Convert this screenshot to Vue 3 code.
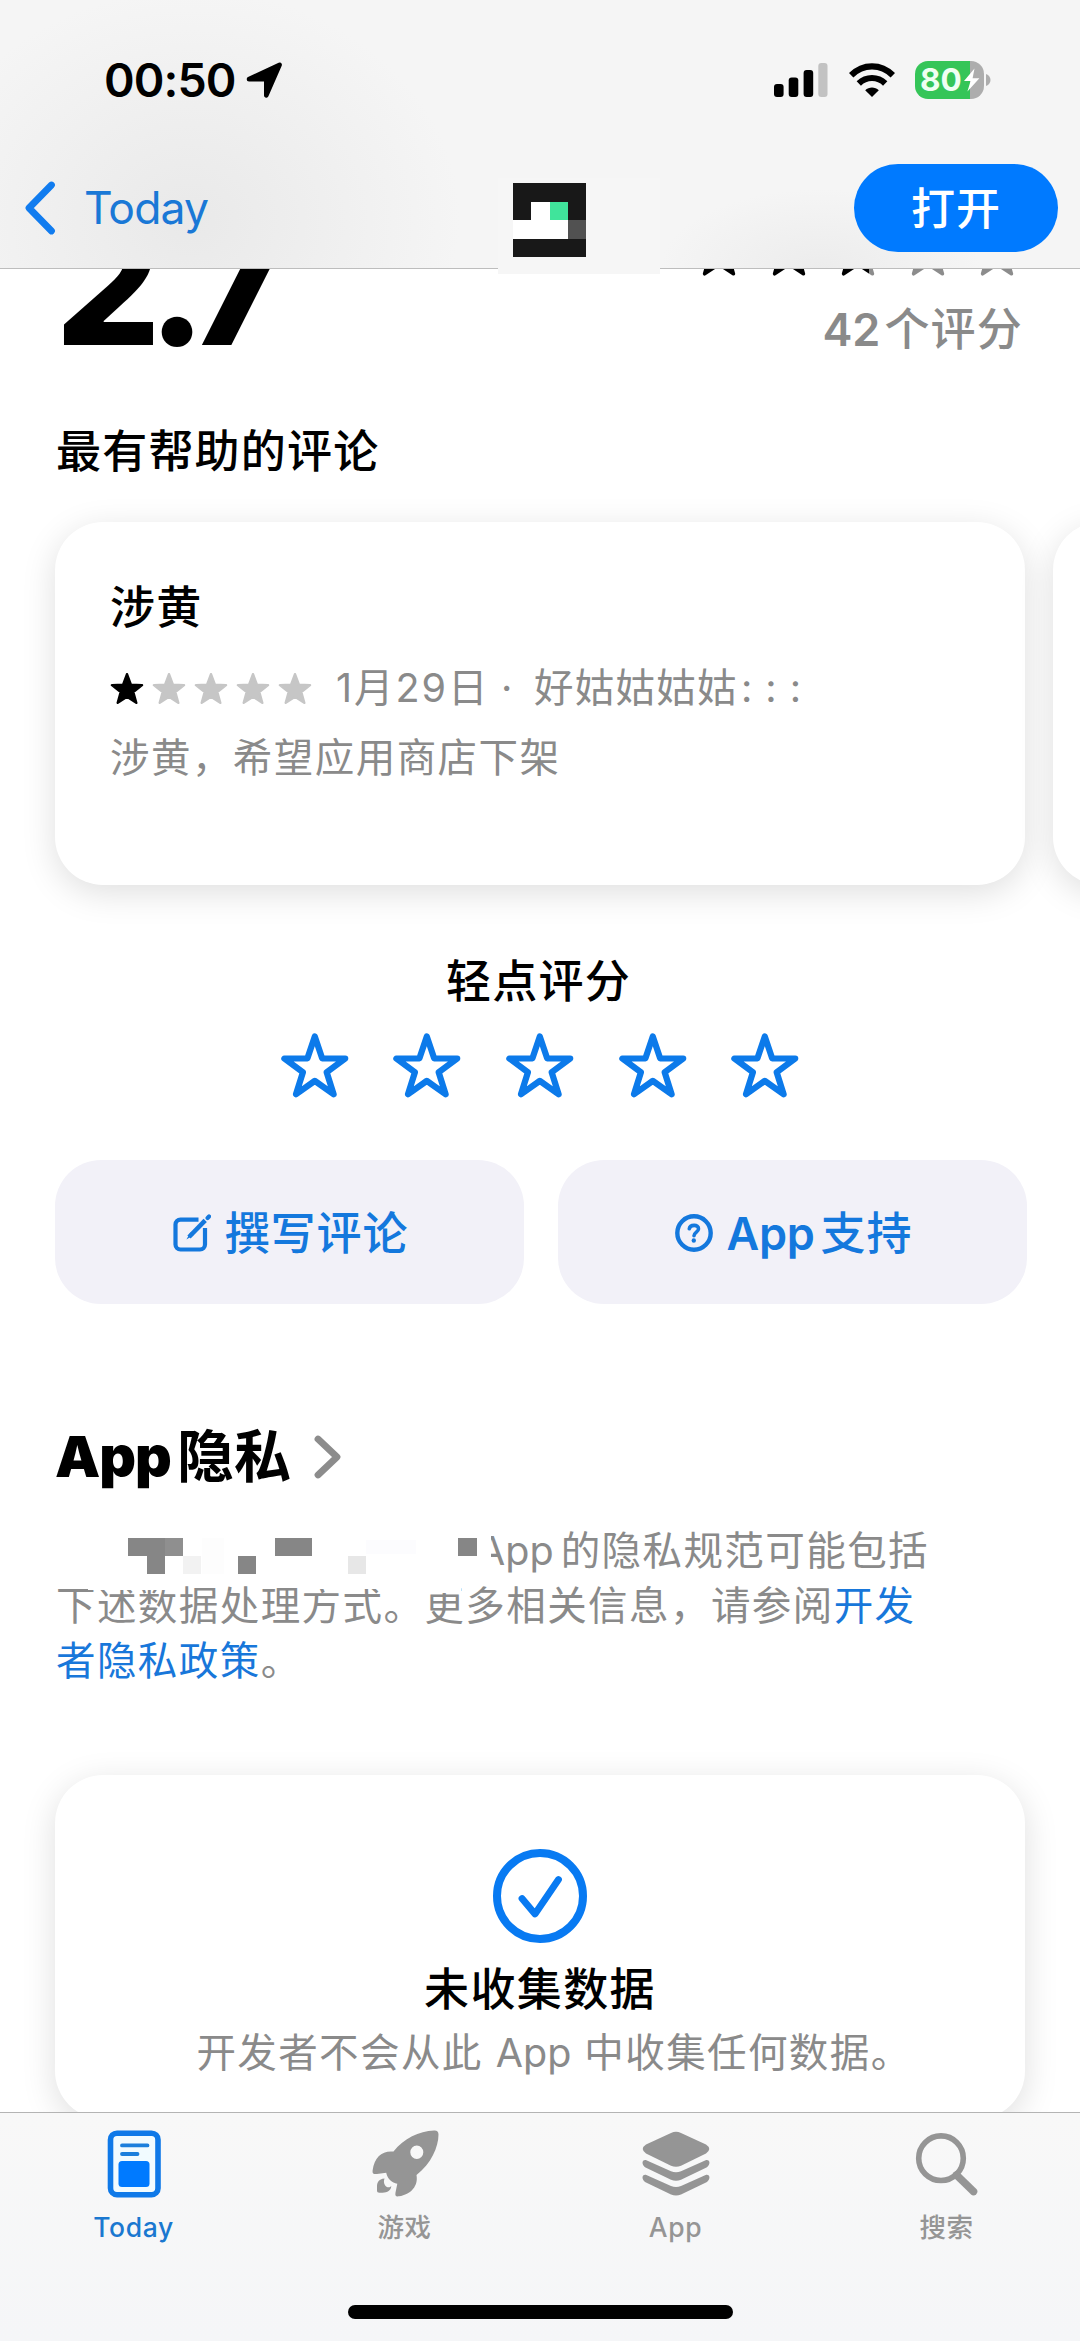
<script setup>
function starPoints(cx, cy, r, inner) {
  const pts = []
  for (let i = 0; i < 10; i++) {
    const rad = i % 2 ? r * inner : r
    const a = -Math.PI / 2 + (i * Math.PI) / 5
    pts.push((cx + rad * Math.cos(a)).toFixed(2) + ',' + (cy + rad * Math.sin(a)).toFixed(2))
  }
  return pts.join(' ')
}
const star = starPoints(34.8, 35.4, 32, 0.39)
const smallStar = starPoints(17, 17, 15.8, 0.42)
const bigStar = starPoints(26, 26, 24.5, 0.42)
const summaryFill = ['#000', '#000', 'url(#partial)', '#8c8c8c', '#8c8c8c']
const reviewFill = ['#000', '#c6c6c6', '#c6c6c6', '#c6c6c6', '#c6c6c6']
const iconCells = [
  '#181818', '#181818', '#181818', '#181818',
  '#181818', '#fff', '#40e49b', '#181818',
  '#fff', '#fff', '#fff', '#515151',
  '#181818', '#181818', '#181818', '#181818',
]
</script>

<template>
  <div class="screen">
    <header class="top">
      <div class="status">
        <span class="time">00:50</span>
        <svg class="loc" width="38" height="38" viewBox="0 0 38 38">
          <path d="M3 18.2 33.6 3.8 20.3 34.4 V18.2Z" fill="#000" stroke="#000" stroke-width="4.6" stroke-linejoin="round" />
        </svg>
        <span class="grow"></span>
        <svg class="bars" width="54" height="36" viewBox="0 0 54 36">
          <rect x="0" y="22" width="9.6" height="13" rx="3" />
          <rect x="14.7" y="15.5" width="9.6" height="19.5" rx="3" />
          <rect x="29.6" y="8" width="9.6" height="27" rx="3" />
          <rect x="44.3" y="1" width="9.2" height="34" rx="3" fill="#c2c2c2" />
        </svg>
        <svg class="wifi" width="46" height="36" viewBox="0 0 46 36">
          <g fill="none" stroke="#000" stroke-width="6.2">
            <path d="M2.2 13.2C14 1.3 32 1.3 43.8 13.2" />
            <path d="M9.8 21.4C17.3 14.2 28.7 14.2 36.2 21.4" />
          </g>
          <path d="M23 35 16.2 28.2C20 24.6 26 24.6 29.8 28.2Z" />
        </svg>
        <div class="battery">
          <span class="level">80</span>
          <svg class="bolt" width="18" height="24" viewBox="0 0 18 24"><path d="M11.5 0.5 1 13H7.6L4.4 23.5 16.4 10.2H9.6Z" fill="#fff" /></svg>
        </div>
        <svg class="tip" width="5" height="12" viewBox="0 0 5 12"><path d="M0 0C6 2 6 10 0 12Z" fill="#adadad" /></svg>
      </div>
      <nav class="nav">
        <svg class="back" width="36" height="56" viewBox="0 0 36 56"><path d="M30.500 5 8 28 30.500 51" fill="none" stroke="#117cef" stroke-width="6.8" stroke-linecap="round" stroke-linejoin="round" /></svg>
        <span class="back-label">Today</span>
        <button class="open">打开</button>
      </nav>
      <div class="app-tile">
        <div class="app-icon">
          <i v-for="(c, i) in iconCells" :key="i" :style="{ background: c }"></i>
        </div>
      </div>
    </header>

    <main class="content">
      <section class="summary">
        <div class="score">2.7</div>
        <div class="totals">
          <div class="total-stars">
            <svg v-for="(f, i) in summaryFill" :key="i" width="52" height="52" viewBox="0 0 52 52">
              <defs>
                <linearGradient id="partial">
                  <stop offset="0.74" stop-color="#000" /><stop offset="0.74" stop-color="#8c8c8c" />
                </linearGradient>
              </defs>
              <polygon :points="bigStar" :fill="f" :stroke="f" stroke-width="3.5" stroke-linejoin="round" />
            </svg>
          </div>
          <div class="count"><span class="num">42</span>个评分</div>
        </div>
      </section>

      <h3 class="sub">最有帮助的评论</h3>
      <section class="reviews">
        <article class="card review">
          <h4>涉黄</h4>
          <div class="meta">
            <div class="small-stars">
              <svg v-for="(f, i) in reviewFill" :key="i" width="34" height="34" viewBox="0 0 34 34">
                <polygon :points="smallStar" :fill="f" :stroke="f" stroke-width="2.4" stroke-linejoin="round" />
              </svg>
            </div>
            <span class="date">1月29日</span><span class="mid">·</span><span class="author">好姑姑姑姑</span><span class="colons">:::</span>
          </div>
          <p>涉黄，希望应用商店下架</p>
        </article>
        <article class="card next"></article>
      </section>

      <h3 class="tap">轻点评分</h3>
      <div class="tap-stars">
        <svg v-for="n in 5" :key="n" width="70" height="65" viewBox="0 0 70 65">
          <polygon :points="star" fill="none" stroke="#0c7aea" stroke-width="6.200" stroke-linejoin="round" />
        </svg>
      </div>

      <div class="actions">
        <button class="action">
          <svg width="38" height="38" viewBox="0 0 38 38" fill="none" stroke="#1478dd">
            <path d="M25.5 5.6H7.5A5 5 0 0 0 2.5 10.600V30.500A5 5 0 0 0 7.500 35.500H27A5 5 0 0 0 32 30.500V14" stroke-width="4.200" />
            <path d="M32.200 6.400 16 23" stroke-width="4.600" />
            <path d="M17.500 18.300 13.400 25.500 20.500 21.300Z" fill="#1478dd" stroke="none" />
            <path d="M34.600 3.900 36 2.500" stroke-width="4.200" stroke-linecap="round" />
          </svg>
          <span>撰写评论</span>
        </button>
        <button class="action">
          <svg width="38" height="38" viewBox="0 0 38 38" fill="none" stroke="#1478dd">
            <circle cx="19" cy="19" r="16.700" stroke-width="4.400" />
            <path d="M14.300 14.800C15 10.200 23.700 10.200 23.500 15 23.400 18 19 18.300 19 21.800" stroke-width="3.600" stroke-linecap="round" />
            <circle cx="18.800" cy="26.500" r="2.200" fill="#1478dd" stroke="none" />
          </svg>
          <span><b class="latin">App</b>支持</span>
        </button>
      </div>

      <h2 class="privacy-title">
        <b>App</b><span>隐私</span>
        <svg width="30" height="48" viewBox="0 0 30 48"><path d="M5 6 24 24 5 42" fill="none" stroke="#8c8c8c" stroke-width="6.800" stroke-linecap="round" stroke-linejoin="round" /></svg>
      </h2>
      <div class="privacy">
        <div class="line first"><span class="name-gap"></span><span class="latin">App</span>的隐私规范可能包括</div>
        <div class="line">下述数据处理方式。更多相关信息，请参阅<a>开发</a></div>
        <div class="line"><a>者隐私政策</a>。</div>
        <svg class="mosaic" width="410" height="60" viewBox="88 1537 410 60" shape-rendering="crispEdges">
          <path d="M88 1537H491V1575H461V1594H425V1590H303V1586H181V1591H88Z" fill="#fff" />
          <g fill="#868686">
            <rect x="128" y="1539" width="55" height="18" />
            <rect x="147" y="1557" width="18" height="18" />
            <rect x="238" y="1557" width="18" height="18" />
            <rect x="275" y="1539" width="37" height="18" />
            <rect x="458" y="1539" width="19" height="18" />
          </g>
          <rect x="165" y="1539" width="18" height="18" fill="#8f8f8f" />
          <rect x="183" y="1557" width="18" height="18" fill="#f2f2f2" />
          <rect x="348" y="1557" width="18" height="18" fill="#e7e7e7" />
          <rect x="202" y="1539" width="22" height="36" fill="#fdfdfd" />
          <rect x="366" y="1541" width="50" height="14" fill="#fcfcfe" />
        </svg>
      </div>

      <section class="card data">
        <svg width="94" height="94" viewBox="0 0 94 94" fill="none" stroke="#087af2" stroke-linecap="round" stroke-linejoin="round">
          <circle cx="47" cy="47" r="43" stroke-width="8" />
          <path d="M29 49.500 42 65 65.500 30.500" stroke-width="6.800" />
        </svg>
        <h4>未收集数据</h4>
        <p>开发者不会从此<span class="latin">App</span>中收集任何数据。</p>
      </section>
    </main>

    <footer class="tabs">
      <div class="tab-row">
        <div class="tab on">
          <svg width="70" height="70" viewBox="0 0 70 70">
            <rect x="11.500" y="4.200" width="47.500" height="61.500" rx="6.500" fill="#f1fbff" stroke="#0f79e8" stroke-width="5.600" />
            <path d="M23 16.400H48.500M23 25H38.500" stroke="#1c7fdc" stroke-width="3.800" stroke-linecap="round" />
            <rect x="19.500" y="32" width="31" height="26" rx="3.500" fill="#007aff" />
          </svg>
          <span>Today</span>
        </div>
        <div class="tab">
          <svg width="70" height="70" viewBox="0 0 70 70">
            <path fill="#959595" fill-rule="evenodd" d="M23.500 22.600C34 9 49 2.200 64 1.500 67 1.300 68.500 2.500 68.500 5.500 68.500 18 61 35 46.500 46 48.500 57 41 65.500 29 67.300 25.500 67.800 25 66.500 25.500 63.500L27.300 54.700C22 54 17.500 50 16.200 43.700L7 45C3.500 45.500 2.200 44.500 2.600 41.500 4.500 28 12 21.500 23.500 22.600ZM46.800 16.500A6.500 6.800 0 1 0 46.800 30.100 6.500 6.800 0 1 0 46.800 16.500Z" />
            <path fill="#959595" d="M14.500 49.500C8.500 50 7 53.500 7 58V61.500C7 63 7.800 63.700 9.500 63.700H12.500C17.500 63.700 21 61.500 21.300 57 18.500 60.500 12 56.500 14.500 49.500Z" />
          </svg>
          <span>游戏</span>
        </div>
        <div class="tab">
          <svg width="70" height="70" viewBox="0 0 70 70" fill="#959595">
            <path d="M30 3.900Q35 1.700 40 3.900L65 15.600Q71.500 20 65 24.400L40 36.700Q35 38.800 30 36.700L5 24.400Q-1.500 20 5 15.600Z" />
            <path d="M4.800 31 30 42.300Q35 44.200 40 42.300L65.200 31C69.500 30.500 69.500 36 65.500 38.500L40 50.800Q35 52.800 30 50.800L4.500 38.500C.5 36 .5 30.500 4.800 31Z" />
            <path d="M4.800 45.800 30 57.100Q35 59 40 57.100L65.200 45.800C69.500 45.300 69.500 50.800 65.500 53.300L40 65.600Q35 67.600 30 65.600L4.500 53.300C.5 50.800 .5 45.300 4.800 45.800Z" />
          </svg>
          <span>App</span>
        </div>
        <div class="tab">
          <svg width="70" height="70" viewBox="0 0 70 70" fill="none" stroke="#959595">
            <circle cx="29" cy="29.200" r="22.300" stroke-width="5.600" />
            <path d="M44.500 46 61.500 62.500" stroke-width="7.600" stroke-linecap="round" />
          </svg>
          <span>搜索</span>
        </div>
      </div>
      <div class="home"></div>
    </footer>
  </div>
</template>

<style>
body { margin: 0; background: #fff; }
</style>

<style scoped>
.screen {
  width: 1080px; height: 2341px; overflow: hidden; background: #fff; color: #000;
  display: flex; flex-direction: column;
  font-family: Inter, "Noto Sans CJK SC", sans-serif;
}
h2, h3, h4, p { margin: 0; font-weight: 500; }
button { border: 0; padding: 0; font: inherit; }
svg { display: block; flex: none; }

.top {
  position: relative; z-index: 2; box-sizing: border-box; height: 269px; flex: none;
  border-bottom: 1px solid #bdbdbd;
  background:
    radial-gradient(ellipse 270px 230px at 190px 220px, #e9e9e9, rgba(245, 245, 245, 0)),
    radial-gradient(ellipse 160px 80px at 820px 269px, #ececec, rgba(245, 245, 245, 0)),
    #f5f5f5;
}
.status { display: flex; height: 38px; padding: 61px 90px 0 104px; align-items: center; }
.time { width: 142px; font-size: 46.500px; line-height: 38px; font-weight: 600; letter-spacing: -.900px; white-space: nowrap; }
.grow { flex: 1; }
.bars { margin-right: 21px; }
.wifi { margin-right: 20px; }
.battery {
  display: flex; align-items: center; width: 69px; height: 38px; border-radius: 13px;
  background: linear-gradient(90deg, #35c558 55.500px, #adadad 55.500px);
}
.level { width: 43px; margin-left: 5.500px; font-size: 31.500px; line-height: 38px; font-weight: 700; color: #effff2; }
.tip { margin-left: 2px; margin-right: -0.500px; }

.nav { display: flex; align-items: center; height: 88px; margin-top: 65px; padding: 0 22px 0 21px; }
.back { margin-right: 27px; }
.back-label { flex: 1; font-size: 44.500px; line-height: 88px; color: #1a78d6; letter-spacing: -.900px; }
.open {
  width: 204px; height: 88px; border-radius: 44px; background: #007aff; color: #fff;
  font-size: 44px; font-weight: 500; letter-spacing: 1px; padding-bottom: 5px;
}
.app-tile { position: absolute; left: 498px; top: 178px; width: 147px; height: 81px; padding: 5px 0 10px 15px; background: #f6f6f6; }
.app-icon { display: grid; grid-template-columns: repeat(4, 18.250px); grid-auto-rows: 18.500px; width: 73px; background: #181818; }

.content { height: 1843px; flex: none; overflow: hidden; }
.summary { display: flex; justify-content: space-between; height: 112px; padding: 0 57px 0 55px; }
.score { margin-top: -44px; font-size: 166px; line-height: 120px; height: 120px; font-weight: 800; letter-spacing: -13px; }
.totals { margin-top: -41px; }
.total-stars { display: flex; gap: 17.500px; height: 52px; }
.count { margin-top: 19.500px; font-size: 45px; line-height: 60px; font-weight: 500; color: #8a8a8a; text-align: right; letter-spacing: 1.200px; }
.num { font-weight: 600; letter-spacing: 0; margin-right: 4px; }
.sub { margin: 41px 0 0 56px; font-size: 45px; line-height: 60px; letter-spacing: 1.200px; }

.card { background: #fff; border-radius: 48px; box-shadow: 0 8px 34px rgba(0, 0, 0, .13); }
.reviews { display: flex; gap: 28px; margin: 40px 0 0 55px; }
.review { flex: none; box-sizing: border-box; width: 970px; height: 363px; padding: 56px 0 0 55px; }
.next { flex: none; width: 970px; height: 363px; }
.review h4 { font-size: 45px; line-height: 60px; letter-spacing: 1.200px; }
.meta { display: flex; align-items: center; height: 52px; margin-top: 24px; font-size: 39.500px; line-height: 52px; color: #8a8a8a; letter-spacing: 1.300px; white-space: nowrap; }
.small-stars { display: flex; gap: 8.100px; margin-left: -.500px; margin-right: 24px; padding-top: 4px; }
.date { width: 165px; letter-spacing: 2px; }
.mid { width: 33px; }
.colons { letter-spacing: 13px; margin-left: 3px; }
.review p { margin-top: 18px; font-size: 39.500px; line-height: 52px; color: #8a8a8a; letter-spacing: 1.450px; font-weight: 400; }

.tap { margin-top: 67px; font-size: 45px; line-height: 60px; letter-spacing: 1.200px; text-align: center; text-indent: -3px; }
.tap-stars { display: flex; justify-content: center; gap: 42.600px; margin-top: 21px; }
.actions { display: flex; gap: 34px; margin: 62px 53px 0 55px; }
.action {
  flex: 1; display: flex; align-items: center; justify-content: center; gap: 14px; height: 144px;
  border-radius: 46px; background: #f2f1f8; color: #1478dd; font-size: 45px; font-weight: 500; letter-spacing: .900px;
}
.action svg { margin: 2px 0 0 2px; }
.action > span { margin-top: -3px; }
.action .latin { font-weight: 600; margin-right: 6px; letter-spacing: -.300px; }

.privacy-title { display: flex; align-items: center; height: 70px; margin: 118px 0 0 55px; line-height: 70px; font-size: 57px; font-weight: 700; }
.privacy-title b { margin-right: 6px; letter-spacing: -1px; }
.privacy-title svg { margin-left: 22px; }
.privacy { position: relative; margin: 32px 0 0 56px; font-size: 39.500px; color: #8a8a8a; letter-spacing: 1.430px; }
.line { line-height: 55px; white-space: nowrap; }
.line a { color: #1877da; }
.name-gap { display: inline-block; width: 422px; }
.privacy .latin { letter-spacing: 0; margin-right: 7px; }
.mosaic { position: absolute; left: 32px; top: 12px; }

.data { display: flex; flex-direction: column; align-items: center; box-sizing: border-box; width: 970px; height: 344px; margin: 86px 0 0 55px; padding-top: 74px; }
.data h4 { margin-top: 19px; font-size: 45px; line-height: 56px; letter-spacing: 1.400px; }
.data p { margin-top: 10px; padding-left: 28px; font-size: 39.500px; line-height: 50px; font-weight: 400; color: #8a8a8a; letter-spacing: 1.400px; white-space: nowrap; }
.data .latin { letter-spacing: 0; margin: 0 13px; }

.tabs { box-sizing: border-box; height: 229px; border-top: 1px solid #b4b4b4; background: linear-gradient(#f8f8f8, #f5f6f8); }
.tab-row { display: flex; width: 1084px; margin-left: -2px; padding-top: 16px; }
.tab { flex: 1; display: flex; flex-direction: column; align-items: center; color: #959595; font-size: 26.500px; font-weight: 500; line-height: 36px; }
.tab span { margin-top: 10px; letter-spacing: .6px; }
.on { color: #1a78d0; }
.home { width: 385px; height: 14px; margin: 60px 0 0 348px; border-radius: 7px; background: #000; }
</style>
